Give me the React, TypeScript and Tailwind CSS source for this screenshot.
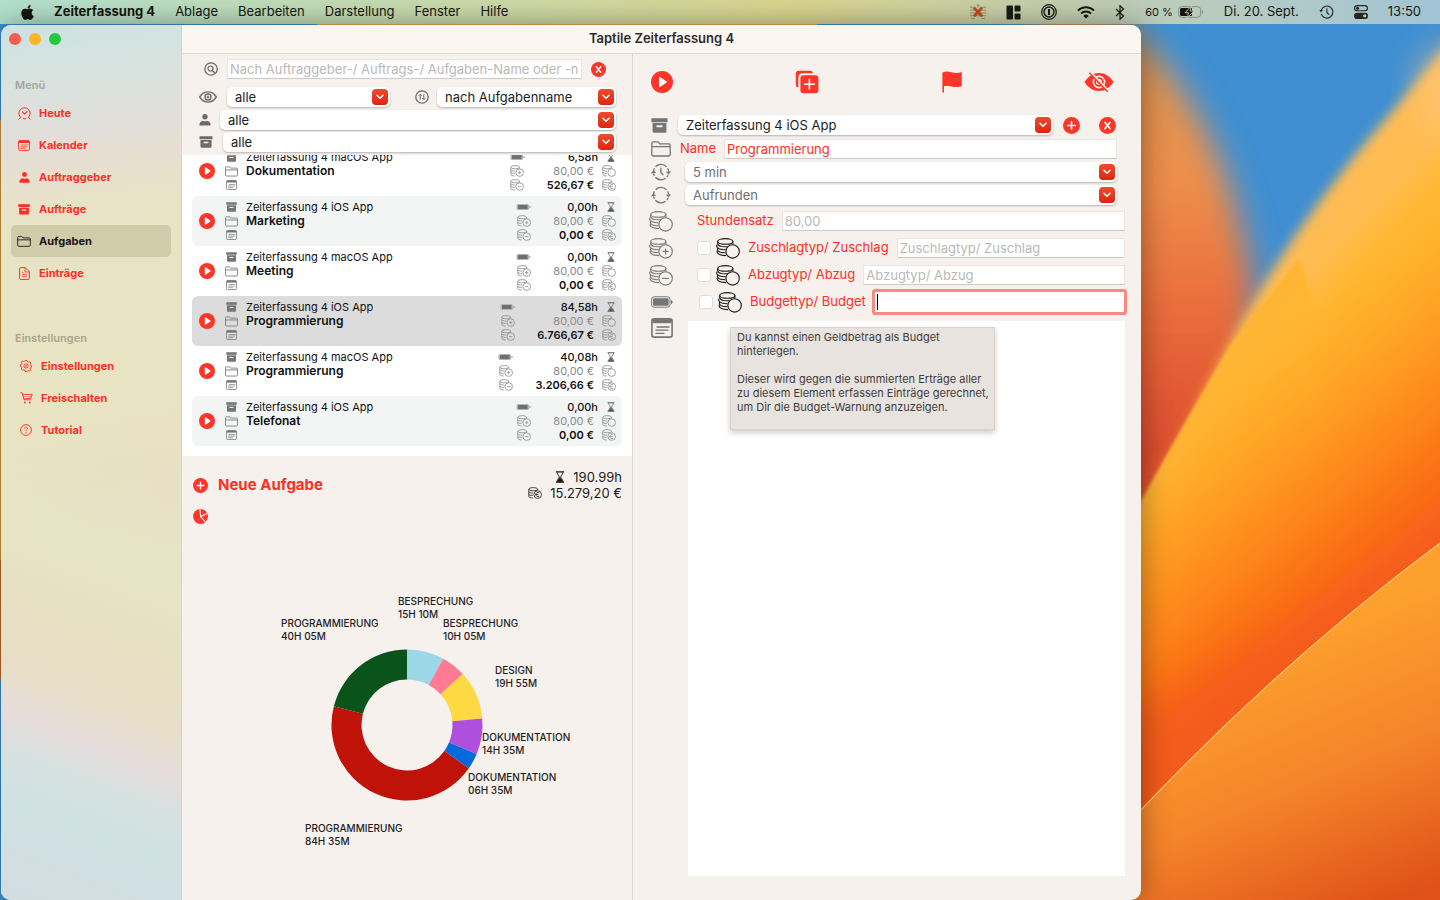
import type { ReactNode } from "react";
import { FaApple } from "react-icons/fa";

type IconProps = { className?: string };

/* ---------- icons ---------- */

function PlayCircle({ className }: IconProps) {
  return (
    <svg viewBox="0 0 22 22" className={className} aria-hidden="true">
      <circle cx="11" cy="11" r="11" fill="#ff3529" />
      <path d="M8 6.6c0-.6.5-.9 1-.6l6.6 4.4c.5.3.5.9 0 1.2L9 16c-.5.3-1 0-1-.6z" fill="#fff" />
    </svg>
  );
}

function PlusCircle({ className }: IconProps) {
  return (
    <svg viewBox="0 0 18 18" className={className} aria-hidden="true">
      <circle cx="9" cy="9" r="9" fill="#ff3529" />
      <path d="M9 5v8M5 9h8" stroke="#fff" strokeWidth="1.7" strokeLinecap="round" />
    </svg>
  );
}

function CrossCircle({ className }: IconProps) {
  return (
    <svg viewBox="0 0 18 18" className={className} aria-hidden="true">
      <circle cx="9" cy="9" r="9" fill="#ff3529" />
      <path d="M6.4 5.8l5.2 6.4M11.6 5.8l-5.2 6.4" stroke="#fff" strokeWidth="1.8" strokeLinecap="round" />
    </svg>
  );
}

function DuplicateIcon({ className }: IconProps) {
  return (
    <svg viewBox="0 0 24 24" className={className} fill="none" aria-hidden="true">
      <path d="M3.3 17.6A3 3 0 0 1 .8 14.6V4A3.2 3.2 0 0 1 4 .8h11a3 3 0 0 1 3 2.4H7.5a4.2 4.2 0 0 0-4.2 4.2z" fill="#ff3529" />
      <rect x="5.4" y="5.2" width="18" height="18" rx="3" fill="#ff3529" />
      <path d="M14.4 9.4V19M9.6 14.2h9.6" stroke="#fff" strokeWidth="1.6" strokeLinecap="round" />
    </svg>
  );
}

function FlagIcon({ className }: IconProps) {
  return (
    <svg viewBox="0 0 20 22" className={className} aria-hidden="true">
      <path d="M.4 1.6C3.600-.2 6.600.5 9.600 1.300c3.200.8 6.400.9 10.200-.4v14c-3.600 1.600-7 1.300-10.200.5-2.800-.7-5.200-1-7.600-.1V21.600H.4z" fill="#ff3529" />
    </svg>
  );
}

function EyeSlashIcon({ className }: IconProps) {
  return (
    <svg viewBox="0 0 30 20" className={className} fill="none" aria-hidden="true">
      <path d="M.5 10C4 4.400 9 1 15 1s11 3.400 14.500 9C26 15.600 21 19 15 19S4 15.600.5 10z" fill="#ff3529" />
      <circle cx="15" cy="10" r="5.6" stroke="#f6f1ed" strokeWidth="1.6" />
      <circle cx="15" cy="10" r="2.4" stroke="#f6f1ed" strokeWidth="1.2" />
      <path d="M6.500.2l18 19.200" stroke="#f6f1ed" strokeWidth="2.4" />
      <path d="M5.300.8l18.400 19" stroke="#ff3529" strokeWidth="1.5" />
    </svg>
  );
}

function SearchCircle({ className }: IconProps) {
  return (
    <svg viewBox="0 0 14 14" className={className} fill="none" stroke="currentColor" aria-hidden="true">
      <circle cx="7" cy="7" r="6.200" strokeWidth="1.300" />
      <circle cx="6.500" cy="6.500" r="2.500" strokeWidth="1.200" />
      <path d="M8.400 8.400l2 2" strokeWidth="1.400" strokeLinecap="round" />
    </svg>
  );
}

function SortCircle({ className }: IconProps) {
  return (
    <svg viewBox="0 0 14 14" className={className} fill="none" stroke="currentColor" aria-hidden="true">
      <circle cx="7" cy="7" r="6.200" strokeWidth="1.300" />
      <path d="M5.200 9.800V4.400M3.700 5.900l1.500-1.500 1.500 1.500M8.800 4.200v5.400M7.300 8.100l1.500 1.500 1.500-1.500" strokeWidth="1" />
    </svg>
  );
}

function EyeIcon({ className }: IconProps) {
  return (
    <svg viewBox="0 0 18 12" className={className} fill="none" stroke="currentColor" aria-hidden="true">
      <path d="M.7 6C2.800 2.700 5.700.9 9 .9S15.200 2.700 17.300 6C15.200 9.300 12.300 11.100 9 11.100S2.800 9.300.7 6z" strokeWidth="1.400" />
      <circle cx="9" cy="6" r="3" strokeWidth="1.400" />
      <circle cx="9" cy="6" r="1.100" fill="currentColor" strokeWidth=".4" />
    </svg>
  );
}

function PersonIcon({ className }: IconProps) {
  return (
    <svg viewBox="0 0 12 12" className={className} fill="currentColor" aria-hidden="true">
      <circle cx="6" cy="2.800" r="2.700" />
      <path d="M.5 11.600V10C.5 8 2.500 7.200 4 6.800l2 .8 2-.8c1.500.4 3.500 1.200 3.500 3.200v1.600z" />
    </svg>
  );
}

function BoxIcon({ className }: IconProps) {
  return (
    <svg viewBox="0 0 18 16" className={className} fill="currentColor" aria-hidden="true">
      <path d="M.4.2h17.200v4.200H.4z" />
      <path fillRule="evenodd" d="M1.600 5.200h14.800V14a1.600 1.600 0 0 1-1.600 1.600H3.200A1.600 1.600 0 0 1 1.600 14zM5.800 7.800v2h6.400v-2z" />
    </svg>
  );
}

function FolderIcon({ className }: IconProps) {
  return (
    <svg viewBox="0 0 20 16" className={className} fill="none" stroke="currentColor" strokeWidth="1.300" aria-hidden="true">
      <path d="M.8 13.400V2.200C.8 1.400 1.400.8 2.200.8h4.200c.5 0 .9.200 1.200.6l1 1.400h9.200c.8 0 1.400.6 1.400 1.400v9.200c0 .9-.7 1.600-1.600 1.600H2.400c-.9 0-1.600-.7-1.600-1.600z" />
      <path d="M.8 5.600h18.400" />
    </svg>
  );
}

function NotesIcon({ className }: IconProps) {
  return (
    <svg viewBox="0 0 22 20" className={className} fill="none" stroke="currentColor" aria-hidden="true">
      <rect x=".9" y=".9" width="20.200" height="18.200" rx="2.200" strokeWidth="1.600" />
      <path d="M1.400 3.200h19.200" strokeWidth="4" />
      <path d="M6 9h12M5 12.200h12M5 15.400h8" strokeWidth="1.300" strokeLinecap="round" />
    </svg>
  );
}

function DocumentIcon({ className }: IconProps) {
  return (
    <svg viewBox="0 0 11 13" className={className} fill="none" stroke="currentColor" aria-hidden="true">
      <path d="M.6 11.400V1.600c0-.6.4-1 1-1h4.600l4.200 4.200v6.600c0 .6-.4 1-1 1H1.600c-.6 0-1-.4-1-1z" />
      <path d="M6 .8v4.200h4.200M3 7.400h5M3 9.400h5M3 5.400h1.400" strokeWidth=".8" />
    </svg>
  );
}

function TodayIcon({ className }: IconProps) {
  return (
    <svg viewBox="0 0 13 13" className={className} fill="none" stroke="currentColor" aria-hidden="true">
      <path d="M3.200 10.900A5.600 5.600 0 1 1 9.800 10.900M4.800 11.700h3.400" strokeWidth="1" />
      <path d="M4.200 4.700l2.300 2.200 3-2.600" strokeWidth="1.100" />
      <path d="M.6 12.400l2-1.800M12.400 12.400l-2-1.800" strokeWidth="1" />
    </svg>
  );
}

function GearIcon({ className }: IconProps) {
  return (
    <svg viewBox="0 0 12 12" className={className} fill="none" stroke="currentColor" aria-hidden="true">
      <path strokeWidth=".9" strokeLinejoin="round" d="M5 .6h2l.4 1.300 1 .4 1.200-.6 1.200 1.300-.6 1.200.4 1 1 .5v1.600l-1.100.5-.4 1 .6 1.200-1.200 1.200-1.200-.6-1 .4L7 11.400H5l-.4-1.300-1-.4-1.200.6L1.200 9.100l.6-1.200-.4-1-1-.5V4.900l1.100-.5.4-1-.6-1.200L2.500.9l1.200.7 1-.4z" />
      <circle cx="6" cy="5.900" r="2.100" strokeWidth=".9" />
      <circle cx="6" cy="5.900" r=".6" strokeWidth=".6" />
    </svg>
  );
}

function CartIcon({ className }: IconProps) {
  return (
    <svg viewBox="0 0 13 12" className={className} fill="none" stroke="currentColor" aria-hidden="true">
      <path d="M.4.8h1.800l1.900 7h6.700M2.600 2.400h9.600l-1.200 3.800-7.300.6" strokeWidth=".9" />
      <path d="M2.900 4.400h8.600" strokeWidth=".5" />
      <circle cx="4.800" cy="10.500" r=".9" fill="currentColor" stroke="none" />
      <circle cx="9.800" cy="10.500" r=".9" fill="currentColor" stroke="none" />
    </svg>
  );
}

function HelpIcon({ className }: IconProps) {
  return (
    <svg viewBox="0 0 12 12" className={className} fill="none" stroke="currentColor" aria-hidden="true">
      <circle cx="6" cy="6" r="5.400" strokeWidth=".9" />
      <path d="M4.500 4.700C4.500 3.700 5.200 3.200 6 3.200s1.500.5 1.500 1.300C7.500 5.600 6 5.600 6 7.100" strokeWidth=".9" />
      <circle cx="6" cy="8.700" r=".6" fill="currentColor" stroke="none" />
    </svg>
  );
}

function BatteryIcon({ className }: IconProps) {
  return (
    <svg viewBox="0 0 22 12" className={className} fill="none" stroke="currentColor" aria-hidden="true">
      <rect x=".6" y=".8" width="18.400" height="10.400" rx="2.600" strokeWidth="1" />
      <rect x="2" y="2.300" width="15.600" height="7.400" rx="1.200" fill="currentColor" stroke="none" />
      <path d="M20 4v4c.8-.2 1.600-1 1.600-2S20.800 4.200 20 4z" fill="currentColor" stroke="none" />
    </svg>
  );
}

function SmallBatteryIcon({ className }: IconProps) {
  return (
    <svg viewBox="0 0 15 8" className={className} fill="none" aria-hidden="true">
      <rect x=".5" y="1" width="12.500" height="6" rx="1.500" fill="#b4b4b4" />
      <rect x="2" y="2" width="9.500" height="4" rx=".6" fill="#6f6f6f" />
      <path d="M13.500 2.800v2.400c.8-.2 1.200-.6 1.200-1.200s-.4-1-1.200-1.200z" fill="#8b8b8b" />
    </svg>
  );
}

function HourglassIcon({ className }: IconProps) {
  return (
    <svg viewBox="0 0 8 11" className={className} fill="none" stroke="currentColor" aria-hidden="true">
      <path d="M.2.8h7.600M.2 10.200h7.600" strokeWidth="1.200" />
      <path d="M1.300 1c0 2.500 2 3 2 4.500s-2 2-2 4.500M6.700 1c0 2.500-2 3-2 4.500s2 2 2 4.500" strokeWidth=".8" />
      <path d="M1.600 10c0-2.400 2-2.400 2.200-4.200h.4C4.400 7.600 6.400 7.600 6.400 10z" fill="currentColor" strokeWidth=".4" />
    </svg>
  );
}

type Sign = "plus" | "minus" | "euro";

function CoinsIcon({ className, sign }: IconProps & { sign?: Sign }) {
  return (
    <svg viewBox="0 0 24 21" className={className} fill="none" stroke="currentColor" strokeWidth="1.100" aria-hidden="true">
      <ellipse cx="9.300" cy="3.400" rx="7.600" ry="2.800" />
      <path d="M1.700 3.400v2.400c0 1.600 3.200 3 7.600 3 .8 0 1.500 0 2.200-.1M16.900 3.400v3" />
      <path d="M1.200 6.600C.8 7 .6 7.500.6 8.200c0 1.800 3.800 3.500 8.800 3.600" />
      <path d="M1.800 10.200c-.3.300-.4.700-.4 1.200 0 1.600 3.300 3.100 8 3.300" />
      <path d="M1.400 12.600c-.2.300-.3.700-.3 1.200 0 1.900 3.600 3.600 9 3.800" />
      <circle cx="16.600" cy="13.400" r="6.700" />
      {sign === "plus" && <path d="M16.600 10.400v6M13.600 13.400h6" />}
      {sign === "minus" && <path d="M13.200 13.400h6.800" />}
      {sign === "euro" && <path d="M19.400 10.300c-3.300-2-6 .3-6 3.100s2.700 5.100 6 3.100M12 12.600h5.500M12 14.400h5.500" />}
    </svg>
  );
}

function SmallCoinsIcon({ className, sign }: IconProps & { sign?: Sign }) {
  return (
    <svg viewBox="0 0 14 12" className={className} fill="none" stroke="currentColor" strokeWidth=".8" aria-hidden="true">
      <ellipse cx="5.200" cy="2.200" rx="4.400" ry="1.600" />
      <path d="M.8 2.200v7.200c0 .9 1.600 1.500 4 1.600M9.600 2.200v1.500" />
      <path d="M.8 4.600c0 .9 1.800 1.500 4.600 1.500M.8 7c0 .9 1.600 1.500 4 1.500" />
      <circle cx="9.700" cy="7.600" r="3.800" />
      {sign === "plus" && <path d="M9.700 6v3.200M8.100 7.600h3.200" />}
      {sign === "minus" && <path d="M8 7.600h3.400" />}
      {sign === "euro" && <path d="M11.300 6c-1.900-1.200-3.400.2-3.400 1.600s1.500 2.800 3.400 1.600M7.200 7.600h3.200" />}
    </svg>
  );
}

function PieIcon({ className }: IconProps) {
  return (
    <svg viewBox="0 0 15 15" className={className} aria-hidden="true">
      <circle cx="7.500" cy="7.500" r="7.500" fill="#ff3529" />
      <path d="M6.900-.2l.7 7.800 7-3.400M7.600 7.600l4.900 5.600" fill="none" stroke="#f6f1ed" strokeWidth="1.100" />
    </svg>
  );
}

function RoundingIcon({ className, hands }: IconProps & { hands?: boolean }) {
  return (
    <svg viewBox="0 0 20 18" className={className} fill="none" stroke="currentColor" strokeWidth="1.300" aria-hidden="true">
      <path d="M2.500 8.800A7.600 7.600 0 0 1 3.400 5.400M4.600 3.700A7.600 7.600 0 0 1 15.600 3.900M16.600 5.200a7.600 7.600 0 0 1 1 3.400" />
      <path d="M17.200 11.600a7.600 7.600 0 0 1-1.200 2.400M14.600 15.300A7.600 7.600 0 0 1 4.400 14.200M3.400 12.900a7.600 7.600 0 0 1-.8-2.300" />
      <path d="M.3 10.300l2.100-2.800 2.400 2.300zM19.700 8.400l-2.100 2.700-2.400-2.200z" fill="currentColor" strokeWidth=".4" />
      {hands && <path d="M9.800 4.600v4.800l2.600 2.600" />}
    </svg>
  );
}

/* ---------- menu bar glyphs ---------- */

function WindowTilesIcon() {
  return (
    <svg viewBox="0 0 15 15" className="h-[15px] w-[15px]" fill="#1a1c18" aria-hidden="true">
      <rect x=".5" y=".5" width="6.500" height="14" rx="1" />
      <rect x="8.500" y=".5" width="6" height="6" rx="1" />
      <rect x="8.500" y="8.500" width="6" height="6" rx="1" />
    </svg>
  );
}

function CrossedStaffIcon() {
  return (
    <svg viewBox="0 0 17 17" className="h-4 w-4" fill="none" aria-hidden="true">
      <path d="M0 3.500h5M12 3.500h5M0 6.500h17M0 9.500h17M0 12.500h17M1 15.500h4M12 15.500h4M8.500 0v4M7 2l1.500-1.500L10 2" stroke="#8b8661" strokeWidth=".9" />
      <path d="M4.200 4l8.600 9M12.800 4l-8.600 9" stroke="#c5481a" strokeWidth="2.800" />
    </svg>
  );
}

function PasswordIcon() {
  return (
    <svg viewBox="0 0 16 16" className="h-4 w-4" fill="none" stroke="#1a1c18" aria-hidden="true">
      <circle cx="8" cy="8" r="7.300" strokeWidth="1.200" />
      <circle cx="8" cy="8" r="5" strokeWidth="1.400" />
      <path d="M8 5v6" strokeWidth="2" />
    </svg>
  );
}

function WifiIcon() {
  return (
    <svg viewBox="0 0 18 13" className="h-[13px] w-[18px]" fill="none" stroke="#15170f" aria-hidden="true">
      <path d="M1 4.600a11.300 11.300 0 0 1 16 0" strokeWidth="2" />
      <path d="M3.900 7.600a7.200 7.200 0 0 1 10.200 0" strokeWidth="2" />
      <path d="M9 12.600L6.400 9.900a3.700 3.700 0 0 1 5.200 0z" fill="#15170f" stroke="none" />
    </svg>
  );
}

function BluetoothIcon() {
  return (
    <svg viewBox="0 0 10 15" className="h-[15px] w-[10px]" fill="none" stroke="#15170f" strokeWidth="1.200" aria-hidden="true">
      <path d="M1 4l7.500 7L5 14.200V.8L8.500 4 1 11" />
    </svg>
  );
}

function ChargingIcon() {
  return (
    <svg viewBox="0 0 26 12" className="h-3 w-[26px]" fill="none" aria-hidden="true">
      <rect x=".6" y=".6" width="22" height="10.800" rx="3" stroke="#868e84" strokeWidth="1" />
      <path d="M3.600 2H14v8H3.600A1.600 1.600 0 0 1 2 8.400V3.600C2 2.700 2.700 2 3.600 2z" fill="#15170f" />
      <path d="M13.200.2L7 6.800h3.600L9.200 12l6.800-6.900h-3.800z" fill="#15170f" stroke="#c6ccb2" strokeWidth=".9" />
      <path d="M24 4v4c.8-.2 1.300-1 1.300-2S24.800 4.200 24 4z" fill="#868e84" />
    </svg>
  );
}

function TimeMachineIcon() {
  return (
    <svg viewBox="0 0 15 14" className="h-[14px] w-[15px]" fill="none" stroke="#23261f" aria-hidden="true">
      <path d="M2.200 5.300a6 6 0 1 1 0 3.600" strokeWidth="1.100" />
      <path d="M.3 4.900h3.600L2 7.600z" fill="#23261f" stroke="none" />
      <path d="M7.900 3.600v3.800l2.200 2.200" strokeWidth="1.100" />
    </svg>
  );
}

function ControlCenterIcon() {
  return (
    <svg viewBox="0 0 14 14" className="h-[14px] w-[14px]" fill="none" aria-hidden="true">
      <rect x=".6" y=".6" width="12.800" height="5.200" rx="2.600" stroke="#23261f" strokeWidth="1.100" />
      <circle cx="3.600" cy="3.200" r="1.500" fill="#23261f" />
      <rect x="0" y="7.700" width="14" height="6.300" rx="3.100" fill="#23261f" />
      <circle cx="10.700" cy="10.850" r="1.700" fill="#b4c9cb" />
    </svg>
  );
}

/* ---------- wallpaper ---------- */

function Wallpaper() {
  return (
    <svg
      viewBox="0 0 1440 900"
      preserveAspectRatio="xMaxYMid slice"
      className="absolute inset-0 h-full w-full"
      aria-hidden="true"
    >
      <defs>
        <linearGradient id="wp-flare" x1="1150" y1="40" x2="1150" y2="500" gradientUnits="userSpaceOnUse">
          <stop offset="0" stopColor="#d89452" />
          <stop offset=".3" stopColor="#ee8f4c" />
          <stop offset=".62" stopColor="#e8693a" />
          <stop offset="1" stopColor="#d8402b" />
        </linearGradient>
        <linearGradient id="wp-petal" x1="1200" y1="400" x2="1360" y2="597" gradientUnits="userSpaceOnUse">
          <stop offset="0" stopColor="#ffb832" />
          <stop offset=".3" stopColor="#ffa325" />
          <stop offset=".62" stopColor="#fe841a" />
          <stop offset=".85" stopColor="#f96b17" />
          <stop offset="1" stopColor="#f9641e" />
        </linearGradient>
        <linearGradient id="wp-front" x1="1290" y1="640" x2="1400" y2="900" gradientUnits="userSpaceOnUse">
          <stop offset="0" stopColor="#fda02d" />
          <stop offset=".5" stopColor="#f5832a" />
          <stop offset="1" stopColor="#df5118" />
        </linearGradient>
        <filter id="wp-blur-wide" x="-30%" y="-30%" width="160%" height="160%">
          <feGaussianBlur stdDeviation="16" />
        </filter>
        <filter id="wp-blur" x="-30%" y="-30%" width="160%" height="160%">
          <feGaussianBlur stdDeviation="6" />
        </filter>
        <filter id="wp-blur-small" x="-30%" y="-30%" width="160%" height="160%">
          <feGaussianBlur stdDeviation="1.500" />
        </filter>
      </defs>
      <rect width="1440" height="900" fill="#3f8fd2" />
      <path d="M0 120h30v440H0z" fill="#cf9a3c" />
      <path d="M317 0h500v60H317z" fill="#e0b050" />
      <path d="M0 560h30v120H0z" fill="#c06f2a" />
      <path
        d="M1040 -30C1120 10 1160 50 1192 105C1225 160 1242 220 1254 290L1240 520H1000z"
        fill="url(#wp-flare)"
        filter="url(#wp-blur-wide)"
      />
      <path
        d="M1160 490L1205 394Q1225 352 1245 316Q1305 210 1397 106L1440 54L1500 -24V700H1200z"
        fill="#ffbc52"
        filter="url(#wp-blur)"
      />
      <path
        d="M1120 541L1141 501Q1180 430 1230 346Q1250 318 1300 258L1340 400V900H1100z"
        fill="#ffb536"
        filter="url(#wp-blur-small)"
      />
      <path
        d="M1118 560L1150 508Q1200 430 1252 356Q1330 270 1430 170L1520 90V920H1080z"
        fill="url(#wp-petal)"
        filter="url(#wp-blur-wide)"
      />
      <ellipse cx="1455" cy="90" rx="40" ry="46" fill="#ffc980" opacity=".55" filter="url(#wp-blur-wide)" />
      <path d="M1080 730L1180 690L1330 600L1480 490V700L1141 840z" fill="#f2571a" opacity=".6" filter="url(#wp-blur-wide)" />
      <path d="M1100 850L1141 810Q1283 660 1440 543L1500 500V960H1100z" fill="url(#wp-front)" />
      <path d="M1141 810Q1283 660 1440 543" fill="none" stroke="#ffc66a" strokeWidth="1.200" />
    </svg>
  );
}

/* ---------- controls ---------- */

function Select({
  label,
  value,
  className,
  muted,
}: {
  label: string;
  value: string;
  className: string;
  muted?: boolean;
}) {
  return (
    <div className={`grid min-w-0 items-center ${className}`}>
      <select
        aria-label={label}
        defaultValue={value}
        className={`col-start-1 row-start-1 h-5 w-full appearance-none rounded-[5px] bg-white pr-6 pl-2 text-[13px] leading-5 shadow-[0_1px_2px_rgba(0,0,0,0.25)] outline-none ${muted ? "text-[#6f6f6f]" : "text-[#1c1c1c]"}`}
      >
        <option>{value}</option>
      </select>
      <span className="pointer-events-none col-start-1 row-start-1 mr-0.5 grid h-4 w-4 place-items-center justify-self-end rounded-[4px] bg-linear-to-b from-[#f04a2c] to-[#dc2410]">
        <svg viewBox="0 0 8 6" className="h-1.5 w-2" fill="none" aria-hidden="true">
          <path d="M1 1.300l3 3 3-3" stroke="#fff" strokeWidth="1.600" strokeLinecap="round" strokeLinejoin="round" />
        </svg>
      </span>
    </div>
  );
}

const fieldClass =
  "h-5 min-w-0 flex-1 border border-[#ebe5e1] border-b-[#cfc9c5] bg-white px-0.5 text-[13px] outline-none placeholder:text-[#b9b9b9]";

/* ---------- sidebar ---------- */

type NavEntry = { label: string; icon: ReactNode; active?: boolean };

const mainNav: NavEntry[] = [
  { label: "Heute", icon: <TodayIcon className="h-[13px] w-[13px]" /> },
  { label: "Kalender", icon: <NotesIcon className="h-[11px] w-3" /> },
  { label: "Auftraggeber", icon: <PersonIcon className="h-[11px] w-[11px]" /> },
  { label: "Aufträge", icon: <BoxIcon className="h-[11px] w-3" /> },
  { label: "Aufgaben", icon: <FolderIcon className="h-[11px] w-[14px]" />, active: true },
  { label: "Einträge", icon: <DocumentIcon className="h-[13px] w-[11px]" /> },
];

const settingsNav: NavEntry[] = [
  { label: "Einstellungen", icon: <GearIcon className="h-3 w-3" /> },
  { label: "Freischalten", icon: <CartIcon className="h-3 w-[13px]" /> },
  { label: "Tutorial", icon: <HelpIcon className="h-3 w-3" /> },
];

function NavList({ entries, indent }: { entries: NavEntry[]; indent: string }) {
  return (
    <ul>
      {entries.map((entry) => (
        <li key={entry.label}>
          <a
            href="#"
            aria-current={entry.active ? "page" : undefined}
            className={`flex h-8 items-center gap-2 rounded-[5px] text-[11px] font-bold ${indent} ${entry.active ? "bg-[#d0cba8] text-[#151515]" : "text-[#ff2f25]"}`}
          >
            <span className="grid w-[14px] place-items-center">{entry.icon}</span>
            {entry.label}
          </a>
        </li>
      ))}
    </ul>
  );
}

function Sidebar() {
  return (
    <aside className="flex w-[181px] shrink-0 flex-col border-r border-[#d9d3c3] bg-[linear-gradient(21deg,#d2dde2_0%,#cfe0e3_11%,#d5e1df_16%,#e5dcdc_20%,#e8dec8_25%,#e7e0c3_32%,#e7e4c5_40%,rgba(231,226,196,0)_56%),linear-gradient(172deg,#cbe3e2_0%,#d8e2de_7%,#e2deda_13%,#e6dfd2_16%,#e8e3c6_22%,#e8e3c2_45%,#e8dec6_56%,#e8e2c6_66%)] px-[10px]">
      <div className="flex h-7 items-center gap-2">
        <button aria-label="Schließen" className="-ml-0.5 h-3 w-3 rounded-full bg-[#fc5b53]" />
        <button aria-label="Minimieren" className="h-3 w-3 rounded-full bg-[#fdb528]" />
        <button aria-label="Vergrößern" className="h-3 w-3 rounded-full bg-[#23c83e]" />
      </div>
      <nav className="flex flex-col">
        <h2 className="mt-6 mb-1 pl-1 text-[11px] leading-4 font-semibold text-[#a6a49c]">Menü</h2>
        <NavList entries={mainNav} indent="pl-1.5" />
        <h2 className="mt-[41px] mb-1 pl-1 text-[11px] leading-4 font-semibold text-[#a9a68c]">Einstellungen</h2>
        <NavList entries={settingsNav} indent="pl-2" />
      </nav>
    </aside>
  );
}

/* ---------- task list ---------- */

type Task = { project: string; name: string; hours: string; total: string; tone: string };

const tasks: Task[] = [
  { project: "Zeiterfassung 4 macOS App", name: "Dokumentation", hours: "6,58h", total: "526,67 €", tone: "bg-white" },
  { project: "Zeiterfassung 4 iOS App", name: "Marketing", hours: "0,00h", total: "0,00 €", tone: "bg-[#f3f5f5]" },
  { project: "Zeiterfassung 4 macOS App", name: "Meeting", hours: "0,00h", total: "0,00 €", tone: "bg-white" },
  { project: "Zeiterfassung 4 iOS App", name: "Programmierung", hours: "84,58h", total: "6.766,67 €", tone: "bg-[#dcdcdc]" },
  { project: "Zeiterfassung 4 macOS App", name: "Programmierung", hours: "40,08h", total: "3.206,66 €", tone: "bg-white" },
  { project: "Zeiterfassung 4 iOS App", name: "Telefonat", hours: "0,00h", total: "0,00 €", tone: "bg-[#f3f5f5]" },
];

const cell = "grid h-[14px] place-items-center";

function TaskRow({ task }: { task: Task }) {
  return (
    <li className={`flex h-[50px] items-center rounded-md pr-1.5 pl-[7px] text-[11px] leading-[14px] text-[#111] ${task.tone}`}>
      <button aria-label={`${task.name} starten`}>
        <PlayCircle className="h-4 w-4" />
      </button>
      <div className="ml-[9px] w-[14px] text-[#757575]">
        <span className={cell}><BoxIcon className="h-[10px] w-[11px]" /></span>
        <span className={cell}><FolderIcon className="h-[11px] w-[13px]" /></span>
        <span className={cell}><NotesIcon className="h-[10px] w-[11px]" /></span>
      </div>
      <div className="ml-2 h-[42px] min-w-0 flex-1">
        <p>{task.project}</p>
        <p className="text-xs leading-[14px] font-semibold">{task.name}</p>
      </div>
      <div className="w-[15px] text-[#8b8b8b]">
        <span className={cell}><SmallBatteryIcon className="h-2 w-[15px]" /></span>
        <span className={cell}><SmallCoinsIcon sign="plus" className="h-3 w-[14px]" /></span>
        <span className={cell}><SmallCoinsIcon sign="minus" className="h-3 w-[14px]" /></span>
      </div>
      <div className="ml-[22px] text-right">
        <p className="font-medium">{task.hours}</p>
        <p className="pr-1 text-[#8a8a8a]">80,00 €</p>
        <p className="pr-1 font-semibold">{task.total}</p>
      </div>
      <div className="ml-1 w-[14px] text-[#8b8b8b]">
        <span className={cell}><HourglassIcon className="ml-1 h-[10px] w-2 text-[#5c5c5c]" /></span>
        <span className={cell}><SmallCoinsIcon className="h-3 w-[14px]" /></span>
        <span className={cell}><SmallCoinsIcon sign="euro" className="h-3 w-[14px]" /></span>
      </div>
    </li>
  );
}

/* ---------- donut chart ---------- */

const slices = [
  { minutes: 910, color: "#9bd7e6", label: "BESPRECHUNG", time: "15H 10M", x: 216, y: 46 },
  { minutes: 605, color: "#ff7b93", label: "BESPRECHUNG", time: "10H 05M", x: 261, y: 68 },
  { minutes: 1195, color: "#ffd941", label: "DESIGN", time: "19H 55M", x: 313, y: 115 },
  { minutes: 875, color: "#ae50dd", label: "DOKUMENTATION", time: "14H 35M", x: 300, y: 182 },
  { minutes: 395, color: "#0469da", label: "DOKUMENTATION", time: "06H 35M", x: 286, y: 222 },
  { minutes: 5075, color: "#bf1208", label: "PROGRAMMIERUNG", time: "84H 35M", x: 123, y: 273 },
  { minutes: 2405, color: "#0a541b", label: "PROGRAMMIERUNG", time: "40H 05M", x: 99, y: 68 },
];

function slicePath(from: number, to: number) {
  const point = (r: number, t: number) => {
    const a = t * 2 * Math.PI;
    return `${(225 + r * Math.sin(a)).toFixed(2)} ${(166 - r * Math.cos(a)).toFixed(2)}`;
  };
  const large = to - from > 0.5 ? 1 : 0;
  return `M${point(75.5, from)}A75.5 75.5 0 ${large} 1 ${point(75.5, to)}L${point(45.5, to)}A45.5 45.5 0 ${large} 0 ${point(45.5, from)}z`;
}

function DonutChart() {
  const total = slices.reduce((sum, s) => sum + s.minutes, 0);
  let run = 0;
  return (
    <svg viewBox="0 0 450 300" className="mx-auto mt-[35px] h-[300px] w-[450px] text-[10px] font-medium" role="img" aria-label="Zeit je Aufgabe">
      {slices.map((s) => {
        const from = run / total;
        run += s.minutes;
        return <path key={s.time} d={slicePath(from, run / total)} fill={s.color} />;
      })}
      {slices.map((s) => (
        <text key={s.time} fill="#1d1d1d" x={s.x} y={s.y}>
          <tspan x={s.x}>{s.label}</tspan>
          <tspan x={s.x} dy="13">{s.time}</tspan>
        </text>
      ))}
    </svg>
  );
}

function TaskPane() {
  return (
    <section className="flex w-[451px] shrink-0 flex-col border-r border-[#ddd7d3]">
      <div className="flex flex-col pr-4 pl-[17px] text-[#6b6b6b]">
        <div className="mt-[5px] flex h-5 items-center gap-[9px]">
          <span className="grid w-[19px] justify-items-end">
            <SearchCircle className="h-[14px] w-[14px]" />
          </span>
          <input aria-label="Suche" placeholder="Nach Auftraggeber-/ Auftrags-/ Aufgaben-Name oder -no" className={fieldClass} />
          <button aria-label="Suche löschen" className="mr-[10px]">
            <CrossCircle className="h-[15px] w-[15px]" />
          </button>
        </div>
        <div className="mt-2 flex h-5 items-center">
          <EyeIcon className="h-3 w-[18px]" />
          <Select label="Sichtbarkeit" value="alle" className="ml-[10px] w-[163px]" />
          <SortCircle className="ml-[25px] h-[14px] w-[14px]" />
          <Select label="Sortierung" value="nach Aufgabenname" className="ml-[8px] flex-1" />
        </div>
        <div className="mt-[3px] flex h-5 items-center gap-[9px]">
          <PersonIcon className="h-3 w-3" />
          <Select label="Auftraggeber" value="alle" className="flex-1" />
        </div>
        <div className="mt-0.5 mb-[3px] flex h-5 items-center gap-[10px]">
          <BoxIcon className="h-3 w-[14px]" />
          <Select label="Auftrag" value="alle" className="flex-1" />
        </div>
      </div>
      <div className="h-[301px] overflow-hidden bg-white px-[10px]">
        <ul className="-mt-[9px]">
          {tasks.map((task) => (
            <TaskRow key={task.project + task.name} task={task} />
          ))}
        </ul>
      </div>
      <div className="mt-[13px] flex items-center justify-between px-[10px]">
        <button className="flex items-center gap-[10px] text-[15px] leading-6 font-bold text-[#ff2f25]">
          <PlusCircle className="ml-px h-[15px] w-[15px]" />
          Neue Aufgabe
        </button>
        <div className="text-right text-[13px] leading-4 text-[#1c1c1c]">
          <p className="flex items-center justify-end gap-2">
            <HourglassIcon className="h-3 w-[10px]" />
            190.99h
          </p>
          <p className="flex items-center justify-end gap-2">
            <SmallCoinsIcon sign="euro" className="h-3 w-[14px]" />
            15.279,20 €
          </p>
        </div>
      </div>
      <button aria-label="Diagramm" className="mt-2 ml-[11px] self-start">
        <PieIcon className="h-[15px] w-[15px]" />
      </button>
      <DonutChart />
    </section>
  );
}

/* ---------- task form ---------- */

function FormIcon({ children }: { children: ReactNode }) {
  return <span className="grid w-6 shrink-0 text-[#757575]">{children}</span>;
}

const checkboxClass =
  "h-[14px] w-[14px] shrink-0 appearance-none rounded-[3px] border border-[#e2dcd8] bg-white";

function MoneyField({ id, label, placeholder }: { id: string; label: string; placeholder: string }) {
  return (
    <>
      <input type="checkbox" aria-label={`${label} aktiv`} className={`ml-6 ${checkboxClass}`} />
      <CoinsIcon className="ml-[5px] h-[21px] w-6 shrink-0 text-[#1a1a1a]" />
      <label htmlFor={id} className="ml-2 text-[#ff2f25]">{label}</label>
      <input id={id} placeholder={placeholder} className={`ml-2 ${fieldClass}`} />
    </>
  );
}

function TaskForm() {
  return (
    <section className="flex min-w-0 flex-1 flex-col pr-4 pl-4 text-[13px]">
      <div className="mt-4 mr-[11px] ml-0.5 flex h-6 items-center justify-between">
        <button aria-label="Starten"><PlayCircle className="h-[22px] w-[22px]" /></button>
        <button aria-label="Duplizieren"><DuplicateIcon className="h-6 w-6" /></button>
        <button aria-label="Markieren"><FlagIcon className="h-[22px] w-5" /></button>
        <button aria-label="Ausblenden"><EyeSlashIcon className="h-5 w-[30px]" /></button>
      </div>

      <div className="mt-[21px] mr-[9px] flex h-5 items-center">
        <FormIcon><BoxIcon className="ml-0.5 h-[15px] w-[17px]" /></FormIcon>
        <Select label="Auftrag" value="Zeiterfassung 4 iOS App" className="ml-[5px] flex-1" />
        <button aria-label="Auftrag anlegen" className="ml-[10px]"><PlusCircle className="h-[17px] w-[17px]" /></button>
        <button aria-label="Auftrag entfernen" className="ml-[19px]"><CrossCircle className="h-[17px] w-[17px]" /></button>
      </div>
      <div className="mt-1 mr-2 flex h-5 items-center">
        <FormIcon><FolderIcon className="ml-0.5 h-4 w-5" /></FormIcon>
        <label htmlFor="task-name" className="ml-[7px] text-[#ff2f25]">Name</label>
        <input id="task-name" defaultValue="Programmierung" className={`ml-2 text-[#ff2f25] ${fieldClass}`} />
      </div>
      <div className="mt-[3px] mr-2 flex h-5 items-center">
        <FormIcon><RoundingIcon hands className="ml-0.5 h-[18px] w-5" /></FormIcon>
        <Select label="Rundung" value="5 min" muted className="ml-3 flex-1" />
      </div>
      <div className="mt-[3px] mr-2 flex h-5 items-center">
        <FormIcon><RoundingIcon className="ml-0.5 h-[18px] w-5" /></FormIcon>
        <Select label="Rundungsart" value="Aufrunden" muted className="ml-3 flex-1" />
      </div>
      <div className="mt-[6px] flex h-5 items-center">
        <FormIcon><CoinsIcon className="h-[21px] w-6" /></FormIcon>
        <label htmlFor="rate" className="ml-6 text-[#ff2f25]">Stundensatz</label>
        <input id="rate" placeholder="80,00" className={`ml-2 ${fieldClass}`} />
      </div>
      <div className="mt-[7px] flex h-5 items-center">
        <FormIcon><CoinsIcon sign="plus" className="h-[21px] w-6" /></FormIcon>
        <MoneyField id="surcharge" label="Zuschlagtyp/ Zuschlag" placeholder="Zuschlagtyp/ Zuschlag" />
      </div>
      <div className="mt-[7px] flex h-5 items-center">
        <FormIcon><CoinsIcon sign="minus" className="h-[21px] w-6" /></FormIcon>
        <MoneyField id="deduction" label="Abzugtyp/ Abzug" placeholder="Abzugtyp/ Abzug" />
      </div>
      <div className="mt-[7px] flex h-5 items-center">
        <FormIcon><BatteryIcon className="ml-0.5 h-3 w-[22px]" /></FormIcon>
        <input type="checkbox" aria-label="Budget aktiv" className={`ml-[26px] ${checkboxClass}`} />
        <CoinsIcon className="ml-[5px] h-[21px] w-6 shrink-0 text-[#1a1a1a]" />
        <label htmlFor="budget" className="ml-2 text-[#ff2f25]">Budgettyp/ Budget</label>
        <div className="mr-px ml-[9px] flex h-5 min-w-0 flex-1 items-center rounded-[1px] bg-white pl-0.5 ring-3 ring-[#f88a80]">
          <span className="h-4 w-px bg-black" />
          <input id="budget" className="h-5 min-w-0 flex-1 bg-transparent outline-none" />
        </div>
      </div>

      <div className="relative mt-[9px] mb-6 flex flex-1 items-start">
        <FormIcon><NotesIcon className="mt-[-3px] ml-0.5 h-5 w-[22px]" /></FormIcon>
        <textarea aria-label="Notiz" className="ml-[15px] min-w-0 flex-1 resize-none self-stretch bg-white outline-none" />
        <div
          role="tooltip"
          className="absolute top-[6px] left-[81px] w-[265px] border border-[#d8d2ce] bg-[#e9e3df] px-[6px] pt-0.5 pb-[15px] text-[11px] leading-[14px] text-[#3c3c3c] shadow-[0_3px_6px_rgba(0,0,0,0.2)]"
        >
          <p>Du kannst einen Geldbetrag als Budget hinterlegen.</p>
          <p className="mt-[14px] whitespace-nowrap">
            Dieser wird gegen die summierten Erträge aller
            <br />
            zu diesem Element erfassen Einträge gerechnet,
            <br />
            um Dir die Budget-Warnung anzuzeigen.
          </p>
        </div>
      </div>
    </section>
  );
}

/* ---------- page ---------- */

function MenuBar() {
  return (
    <header className="relative flex h-6 shrink-0 items-center justify-between bg-linear-to-r from-[#b2e2cf] via-[#dcd68f] via-55% to-[#a3c4d6] pr-[19px] pl-[21px] text-[13px] text-[#15170f]">
      <nav className="flex items-center gap-5">
        <button aria-label="Apple-Menü"><FaApple className="h-[17px] w-[13px]" /></button>
        <button className="font-bold">Zeiterfassung 4</button>
        <button>Ablage</button>
        <button>Bearbeiten</button>
        <button>Darstellung</button>
        <button>Fenster</button>
        <button>Hilfe</button>
      </nav>
      <div className="flex items-center gap-5">
        <CrossedStaffIcon />
        <WindowTilesIcon />
        <PasswordIcon />
        <WifiIcon />
        <BluetoothIcon />
        <span className="flex items-center gap-[5px] text-[11px]">
          60 %
          <ChargingIcon />
        </span>
        <span>Di. 20. Sept.</span>
        <TimeMachineIcon />
        <ControlCenterIcon />
        <time>13:50</time>
      </div>
    </header>
  );
}

export default function App() {
  return (
    <div className="relative flex min-h-screen flex-col overflow-hidden font-['Inter','Liberation_Sans',sans-serif]">
      <Wallpaper />
      <MenuBar />
      <main className="relative mt-px mr-[299px] ml-px flex flex-1 overflow-hidden rounded-[10px] bg-[#f6f1ed] shadow-[0_0_30px_rgba(0,0,0,0.4)]">
        <Sidebar />
        <div className="flex min-w-0 flex-1 flex-col">
          <h1 className="flex h-[29px] shrink-0 items-center justify-center border-b border-[#ddd6d1] bg-[#fcf6f1] text-[13px] font-semibold text-[#2c2c2c]">
            Taptile Zeiterfassung 4
          </h1>
          <div className="flex flex-1">
            <TaskPane />
            <TaskForm />
          </div>
        </div>
      </main>
    </div>
  );
}
